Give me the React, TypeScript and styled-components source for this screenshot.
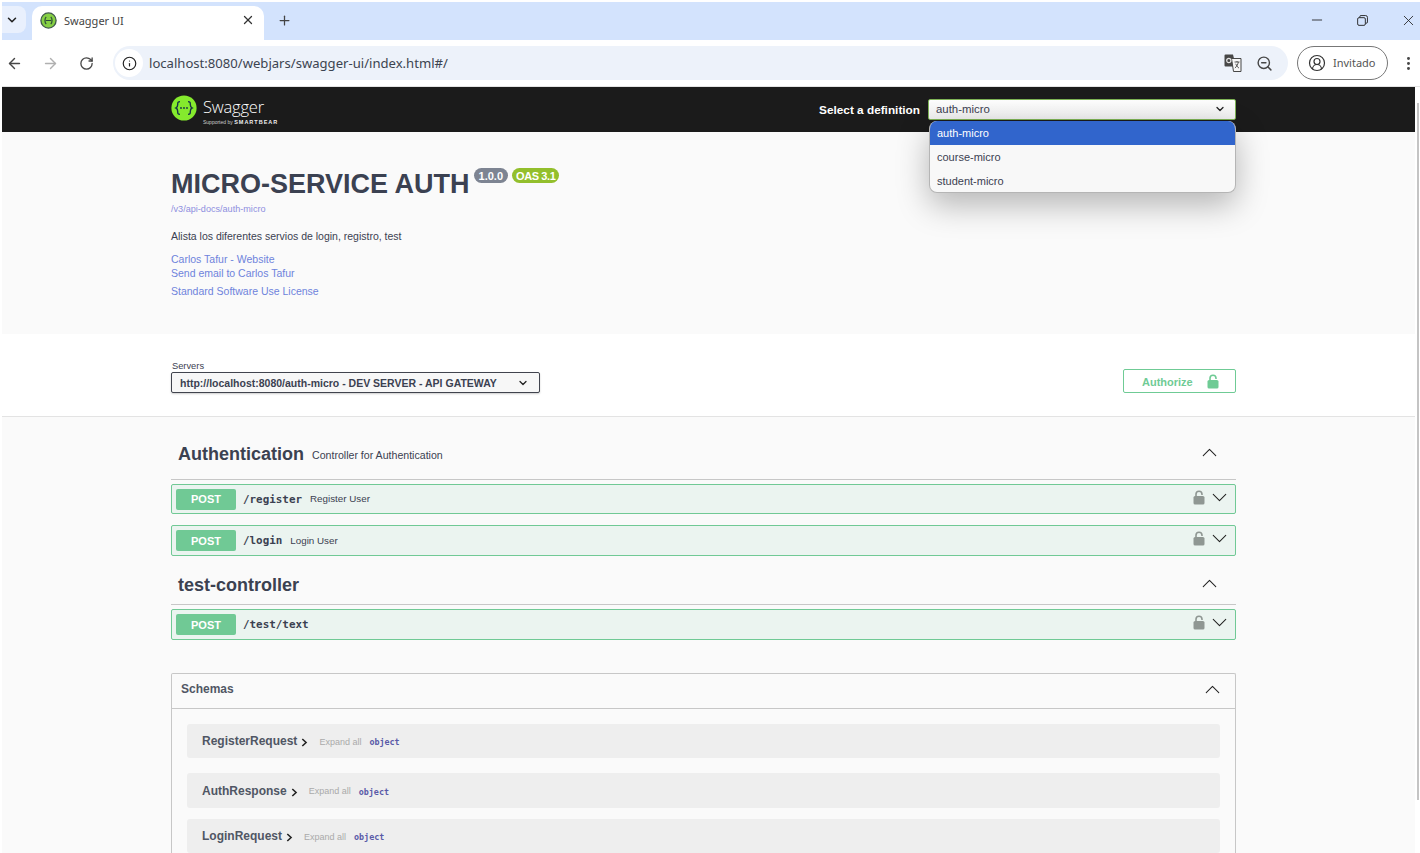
import React from "react";
import styled, { createGlobalStyle } from "styled-components";
import { ArrowLeft, ArrowRight, ChevronDown, ChevronUp, Info, MoreVertical, Plus, RotateCw, ZoomOut, X, Minus, CircleUserRound } from "lucide-react";

const GlobalStyle = createGlobalStyle`
  html, body { margin: 0; padding: 0; background: #fff; }
  body { font-family: "Liberation Sans", Arial, sans-serif; color: #3b4151; height: 853px; overflow: hidden; }
  * { box-sizing: border-box; }
`;

function Lock({ color }: { color: string }) {
  return (
    <svg width="12" height="15" viewBox="0 0 12 15">
      <path d="M3 7V4.2a3 3 0 0 1 6 0V5" fill="none" stroke={color} strokeWidth="1.6" />
      <rect x="0.5" y="6" width="11" height="8.5" rx="1.6" fill={color} />
    </svg>
  );
}

function TranslateIcon() {
  return (
    <svg width="18" height="18" viewBox="0 0 18 18">
      <path d="M1.500 0.500h7.500l3 12H1.500a1 1 0 0 1-1-1v-10a1 1 0 0 1 1-1z" fill="#474747" />
      <path d="M7.500 4.500h9.500v13H9.500z" fill="#f6f6f6" stroke="#474747" strokeWidth="1" />
      <circle cx="4.800" cy="6.500" r="2.100" fill="none" stroke="#e6e6e6" strokeWidth="1.200" />
      <path d="M10.500 8h5M13 7v1M14.300 8c-.4 2.600-1.600 4.600-3.400 6M11.700 9.800c.7 1.800 1.800 3.300 3.300 4.400" fill="none" stroke="#474747" strokeWidth="0.900" />
    </svg>
  );
}

function SwaggerLogo() {
  return (
    <svg width="26" height="26" viewBox="0 0 26 26">
      <circle cx="13" cy="13" r="12.600" fill="#85ea2d" />
      <path
        d="M9 6.600c-2.400 0-2.300 1.300-2.300 3 0 1.800-.3 2.800-1.700 3.400 1.400.6 1.700 1.600 1.700 3.400 0 1.700-.1 3 2.300 3M17 6.600c2.400 0 2.300 1.300 2.300 3 0 1.800.3 2.800 1.700 3.400-1.400.6-1.700 1.600-1.700 3.400 0 1.700.1 3-2.300 3"
        fill="none"
        stroke="#173646"
        strokeWidth="1.400"
      />
      <circle cx="10" cy="13" r="0.900" fill="#173646" />
      <circle cx="13" cy="13" r="0.900" fill="#173646" />
      <circle cx="16" cy="13" r="0.900" fill="#173646" />
    </svg>
  );
}

function Favicon() {
  return (
    <svg width="17" height="17" viewBox="0 0 26 26">
      <circle cx="13" cy="13" r="11.600" fill="#86d044" stroke="#3f5a4a" strokeWidth="2" />
      <path d="M9.500 7.500c-2.600 2.500-2.600 8.500 0 11M16.500 7.500c2.600 2.500 2.600 8.500 0 11M9 13h8" fill="none" stroke="#2c4a3a" strokeWidth="1.800" />
    </svg>
  );
}

function Operation({ path, summary, top, tall }: { path: string; summary: string; top: number; tall?: boolean }) {
  return (
    <OpRow $top={top} $tall={tall}>
      <PostBadge>POST</PostBadge>
      <OpPath>{path}</OpPath>
      <OpSummary>{summary}</OpSummary>
      <OpIcons>
        <Lock color="#8f9793" />
        <ChevronDown size={25} strokeWidth={1} color="#222" />
      </OpIcons>
    </OpRow>
  );
}

function Model({ name, height, top }: { name: string; height: number; top: number }) {
  return (
    <ModelRow $height={height} $top={top}>
      <ModelName>{name}</ModelName>
      <ModelArrow viewBox="0 0 8 10" width="7" height="9">
        <path d="M1.500 1 5.800 5 1.500 9" fill="none" stroke="#222" strokeWidth="1.800" />
      </ModelArrow>
      <ExpandAll>Expand all</ExpandAll>
      <ObjectType>object</ObjectType>
    </ModelRow>
  );
}

export default function App() {
  return (
    <>
      <GlobalStyle />
      <Window>
        <TabStrip>
          <TabSearch>
            <ChevronDown size={14} strokeWidth={2.6} color="#222" />
          </TabSearch>
          <Tab>
            <Favicon />
            <TabTitle>Swagger UI</TabTitle>
            <X size={14} strokeWidth={2.2} color="#333" />
          </Tab>
          <NewTab>
            <Plus size={15} strokeWidth={2} color="#444" />
          </NewTab>
          <WindowControls>
            <Minus size={16} strokeWidth={1.3} color="#222" />
            <RestoreIcon viewBox="0 0 12 12" width="11" height="11">
              <path d="M3 2.700V2a1.400 1.400 0 0 1 1.400-1.400h5a2 2 0 0 1 2 2v5A1.400 1.400 0 0 1 10 9h-.6" fill="none" stroke="#222" />
              <rect x="0.700" y="2.900" width="8.400" height="8.400" rx="1.500" fill="none" stroke="#222" />
            </RestoreIcon>
            <X size={17} strokeWidth={1.2} color="#222" />
          </WindowControls>
        </TabStrip>

        <Toolbar>
          <ArrowLeft size={17} strokeWidth={2} color="#474747" />
          <ArrowRight size={17} strokeWidth={2} color="#b0b0b0" />
          <ReloadIcon size={15} strokeWidth={2.1} color="#474747" />
          <Omnibox>
            <InfoWrap>
              <Info size={15} strokeWidth={1.9} color="#222" />
            </InfoWrap>
            <Url>localhost:8080/webjars/swagger-ui/index.html#/</Url>
            <OmniIcons>
              <TranslateIcon />
              <ZoomOut size={17} strokeWidth={2} color="#474747" />
            </OmniIcons>
          </Omnibox>
          <ProfileChip>
            <CircleUserRound size={18} strokeWidth={1.6} color="#333" />
            <ChipLabel>Invitado</ChipLabel>
          </ProfileChip>
          <MoreIcon size={17} strokeWidth={2.2} color="#474747" />
        </Toolbar>

        <Viewport>
          <Page>
            <Topbar>
              <LogoBox>
                <SwaggerLogo />
                <LogoText>
                  <LogoName>Swagger</LogoName>
                  <LogoSub>
                    Supported by <b>SMARTBEAR</b>
                  </LogoSub>
                </LogoText>
              </LogoBox>
              <DefinitionBox>
                <DefinitionLabel>Select a definition</DefinitionLabel>
                <DefinitionSelect>
                  <span>auth-micro</span>
                  <ChevronDown size={12} strokeWidth={2.6} color="#222" />
                </DefinitionSelect>
                <Dropdown>
                  <DropItem $active>auth-micro</DropItem>
                  <DropItem>course-micro</DropItem>
                  <DropItem>student-micro</DropItem>
                </Dropdown>
              </DefinitionBox>
            </Topbar>

            <InfoSection>
              <TitleRow>
                <Title>MICRO-SERVICE AUTH</Title>
                <Pill>1.0.0</Pill>
                <OasPill>OAS 3.1</OasPill>
              </TitleRow>
              <SpecLink>/v3/api-docs/auth-micro</SpecLink>
              <Description>Alista los diferentes servios de login, registro, test</Description>
              <ContactLinks>
                <InfoLink>Carlos Tafur - Website</InfoLink>
                <InfoLink>Send email to Carlos Tafur</InfoLink>
              </ContactLinks>
              <LicenseLink>Standard Software Use License</LicenseLink>
            </InfoSection>

            <SchemeSection>
              <ServersBox>
                <ServersLabel>Servers</ServersLabel>
                <ServerSelect>
                  <span>http://localhost:8080/auth-micro - DEV SERVER - API GATEWAY</span>
                  <ChevronDown size={12} strokeWidth={2.6} color="#222" />
                </ServerSelect>
              </ServersBox>
              <AuthorizeButton>
                <span>Authorize</span>
                <Lock color="#6fcb95" />
              </AuthorizeButton>
            </SchemeSection>

            <Content>
              <TagHeader $height={63} $pad={12}>
                <TagName>Authentication</TagName>
                <TagDesc>Controller for Authentication</TagDesc>
                <TagChevron>
                  <ChevronUp size={25} strokeWidth={1} color="#222" />
                </TagChevron>
              </TagHeader>
              <Operation path="/register" summary="Register User" top={4} />
              <Operation path="/login" summary="Login User" top={11} tall />
              <TagHeader $height={49} $pad={10}>
                <TagName>test-controller</TagName>
                <TagChevron>
                  <ChevronUp size={25} strokeWidth={1} color="#222" />
                </TagChevron>
              </TagHeader>
              <Operation path="/test/text" summary="" top={4} tall />

              <Schemas>
                <SchemasHead>
                  <SchemasTitle>Schemas</SchemasTitle>
                  <ChevronUp size={25} strokeWidth={1} color="#222" />
                </SchemasHead>
                <SchemasBody>
                  <Model name="RegisterRequest" height={34} top={0} />
                  <Model name="AuthResponse" height={35} top={15} />
                  <Model name="LoginRequest" height={34} top={11} />
                </SchemasBody>
              </Schemas>
            </Content>
          </Page>
          <ScrollEdge />
        </Viewport>
      </Window>
    </>
  );
}

const Window = styled.div`
  width: 1420px;
  height: 853px;
  overflow: hidden;
  padding: 2px 0 0 2px;
  background: #fff;
  display: flex;
  flex-direction: column;
`;

const TabStrip = styled.div`
  flex: none;
  height: 38px;
  background: #d3e3fd;
  display: flex;
  align-items: flex-end;
  font-family: "Noto Sans", "Open Sans", sans-serif;
`;

const TabSearch = styled.div`
  width: 24px;
  height: 27px;
  margin-top: 4px;
  padding-right: 4px;
  align-self: flex-start;
  border-radius: 0 8px 8px 0;
  background: #e9f0fd;
  display: flex;
  align-items: center;
  justify-content: center;
`;

const Tab = styled.div`
  width: 232px;
  height: 34px;
  margin-left: 6px;
  background: #fff;
  border-radius: 10px 10px 0 0;
  display: flex;
  align-items: center;
  padding: 0 9px 6px 8px;
  gap: 7px;
`;

const TabTitle = styled.span`
  flex: 1;
  font-size: 11px;
  color: #444;
`;

const NewTab = styled.div`
  width: 40px;
  height: 34px;
  padding-bottom: 6px;
  display: flex;
  align-items: center;
  justify-content: center;
`;

const WindowControls = styled.div`
  margin-left: auto;
  height: 38px;
  display: flex;
  align-items: center;
  gap: 32px;
  padding: 0 3px 2px 0;
  align-self: flex-start;
`;

const RestoreIcon = styled.svg`
  display: block;
`;

const Toolbar = styled.div`
  flex: none;
  height: 46px;
  display: flex;
  align-items: center;
  padding-left: 4px;
  gap: 19px;
  font-family: "Noto Sans", "Open Sans", sans-serif;
  svg {
    flex: none;
  }
`;

const ReloadIcon = styled(RotateCw)`
  margin-left: 1px;
`;

const MoreIcon = styled(MoreVertical)`
  margin-left: -7px;
`;

const Omnibox = styled.div`
  flex: none;
  width: 1175px;
  height: 34px;
  border-radius: 17px;
  background: #edf2fa;
  display: flex;
  align-items: center;
  padding-left: 2px;
`;

const InfoWrap = styled.div`
  width: 28px;
  height: 28px;
  border-radius: 50%;
  background: #fff;
  display: flex;
  align-items: center;
  justify-content: center;
`;

const Url = styled.div`
  flex: 1;
  margin-left: 6px;
  font-size: 13.100px;
  color: #3c4450;
`;

const OmniIcons = styled.div`
  display: flex;
  align-items: center;
  gap: 14px;
  padding-right: 15px;
`;

const ProfileChip = styled.div`
  flex: none;
  width: 91px;
  height: 34px;
  margin-left: -10px;
  border: 1px solid #777;
  border-radius: 17px;
  display: flex;
  align-items: center;
  padding-left: 10px;
  gap: 7px;
  font-size: 11px;
  color: #555;
`;

const ChipLabel = styled.span`
  margin-top: -2px;
`;

const Viewport = styled.div`
  flex: 1;
  min-height: 0;
  border-top: 1px solid #e3e3e3;
  display: flex;
`;

const Page = styled.div`
  width: 1413px;
  flex: none;
  background: #fafafa;
`;

const ScrollEdge = styled.div`
  width: 2px;
  height: 697px;
  margin: 16px 0 0 2px;
  background: #c4c4c4;
`;

const Topbar = styled.div`
  height: 45px;
  background: #1b1b1b;
  display: flex;
  align-items: center;
  justify-content: space-between;
  padding: 0 179px 0 169px;
`;

const LogoBox = styled.div`
  display: flex;
  align-items: flex-start;
  gap: 6px;
  margin-top: 2px;
`;

const LogoText = styled.div`
  color: #fff;
  display: flex;
  flex-direction: column;
  margin-top: 3px;
`;

const LogoName = styled.div`
  font-family: "Open Sans", sans-serif;
  font-size: 16.500px;
  font-weight: 300;
  line-height: 18px;
  letter-spacing: -0.2px;
`;

const LogoSub = styled.div`
  margin-top: 2px;
  font-size: 5px;
  line-height: 8px;
  color: #ccc;
  white-space: nowrap;
  b {
    font-size: 5.500px;
    font-weight: 700;
    letter-spacing: 1px;
    color: #eee;
  }
`;

const DefinitionBox = styled.div`
  position: relative;
  display: flex;
  align-items: center;
  gap: 8px;
  margin-top: -1px;
`;

const DefinitionLabel = styled.div`
  margin-top: 1px;
  color: #fff;
  font-size: 11.800px;
  font-weight: 700;
`;

const DefinitionSelect = styled.div`
  width: 308px;
  height: 21px;
  border: 1px solid #7eb356;
  border-radius: 2px;
  background: linear-gradient(#fdfdfd, #eeeeee);
  display: flex;
  align-items: center;
  justify-content: space-between;
  padding: 0 9px 0 7px;
  font-size: 11.400px;
  color: #3b4151;
`;

const Dropdown = styled.div`
  position: absolute;
  right: 0;
  top: 22px;
  width: 307px;
  height: 72px;
  background: #f8f8f8;
  border: 1px solid #b5b5b5;
  border-top: none;
  border-radius: 8px;
  overflow: hidden;
  box-shadow: 0 12px 32px rgba(0, 0, 0, 0.28);
  z-index: 5;
`;

const DropItem = styled.div<{ $active?: boolean }>`
  height: 24px;
  display: flex;
  align-items: center;
  padding-left: 7px;
  font-size: 11px;
  background: ${(p) => (p.$active ? "#3165cc" : "transparent")};
  color: ${(p) => (p.$active ? "#fff" : "#3b4151")};
`;

const InfoSection = styled.div`
  height: 202px;
  padding: 35px 0 0 169px;
`;

const TitleRow = styled.div`
  display: flex;
  align-items: flex-start;
`;

const Title = styled.h2`
  margin: 0;
  font-size: 27px;
  line-height: 34px;
  font-weight: 700;
  color: #3b4151;
`;

const Pill = styled.span`
  height: 15px;
  margin: 1px 0 0 4px;
  padding: 0 5px;
  border-radius: 8px;
  background: #7d8492;
  color: #fff;
  font-size: 11px;
  font-weight: 700;
  line-height: 16px;
`;

const OasPill = styled(Pill)`
  padding: 0 4px;
  background: #93bf2c;
  letter-spacing: -0.4px;
`;

const SpecLink = styled.div`
  margin-top: 2px;
  font-size: 9.100px;
  line-height: 12px;
  color: #8e8fe0;
`;

const Description = styled.div`
  margin-top: 14px;
  font-size: 10.500px;
  line-height: 14px;
  color: #3b4151;
`;

const ContactLinks = styled.div`
  margin-top: 9px;
`;

const InfoLink = styled.div`
  font-size: 10.500px;
  line-height: 14px;
  color: #6e83dc;
`;

const LicenseLink = styled(InfoLink)`
  margin-top: 4px;
`;

const SchemeSection = styled.div`
  height: 83px;
  background: #fff;
  border-bottom: 1px solid #e3e3e3;
  display: flex;
  justify-content: space-between;
  padding: 27px 179px 0 169px;
`;

const ServersBox = styled.div`
  display: flex;
  flex-direction: column;
`;

const ServersLabel = styled.div`
  font-size: 9.300px;
  line-height: 11px;
  color: #3b4151;
  padding-left: 1px;
`;

const ServerSelect = styled.div`
  width: 369px;
  height: 21px;
  border: 1px solid #41444e;
  border-radius: 2px;
  box-shadow: 0 1px 2px rgba(0, 0, 0, 0.2);
  background: #f7f7f7;
  display: flex;
  align-items: center;
  justify-content: space-between;
  padding: 0 10px 0 8px;
  font-size: 10.500px;
  font-weight: 700;
  color: #3b4151;
  white-space: nowrap;
`;

const AuthorizeButton = styled.div`
  width: 113px;
  height: 24px;
  margin-top: 8px;
  border: 1px solid #6fcb95;
  border-radius: 2px;
  display: flex;
  align-items: center;
  justify-content: space-between;
  padding: 1px 16px 0 18px;
  font-size: 11px;
  font-weight: 700;
  color: #6fcb95;
`;

const Content = styled.div`
  padding: 0 179px 0 169px;
`;

const TagHeader = styled.div<{ $height: number; $pad: number }>`
  height: ${(p) => p.$height}px;
  border-bottom: 1px solid #c7c7c7;
  display: flex;
  align-items: center;
  padding: ${(p) => p.$pad}px 14px 0 7px;
  gap: 8px;
`;

const TagName = styled.div`
  font-size: 18px;
  font-weight: 700;
  color: #3b4151;
`;

const TagDesc = styled.div`
  font-size: 10.600px;
  margin-top: 2px;
  color: #3b4151;
`;

const TagChevron = styled.div`
  margin: -4px 0 0 auto;
  display: flex;
`;

const OpRow = styled.div<{ $top: number; $tall?: boolean }>`
  height: ${(p) => (p.$tall ? 31 : 30)}px;
  margin-top: ${(p) => p.$top}px;
  border: 1px solid #70c995;
  border-radius: 2px;
  background: #ebf4f0;
  display: flex;
  align-items: center;
  padding: 0 3px 0 4px;
`;

const PostBadge = styled.div`
  width: 60px;
  height: 21px;
  border-radius: 2px;
  background: #70c995;
  color: #fff;
  font-size: 11px;
  font-weight: 700;
  display: flex;
  align-items: center;
  justify-content: center;
`;

const OpPath = styled.div`
  margin-left: 7px;
  font-family: "DejaVu Sans Mono", monospace;
  font-size: 10.900px;
  font-weight: 700;
  color: #3b4151;
`;

const OpSummary = styled.div`
  margin: -1px 0 0 8px;
  font-size: 9.800px;
  color: #3b4151;
`;

const OpIcons = styled.div`
  margin-left: auto;
  display: flex;
  align-items: center;
  gap: 2px;
  margin-top: -4px;
`;

const Schemas = styled.div`
  margin-top: 33px;
  border: 1px solid #c7c7c7;
  border-bottom: none;
  border-radius: 2px 2px 0 0;
`;

const SchemasHead = styled.div`
  height: 35px;
  border-bottom: 1px solid #c7c7c7;
  display: flex;
  align-items: center;
  justify-content: space-between;
  padding: 0 10px 3px 9px;
`;

const SchemasTitle = styled.div`
  margin-top: -2px;
  font-size: 12px;
  font-weight: 700;
  color: #505664;
`;

const SchemasBody = styled.div`
  padding: 15px 15px 0;
`;

const ModelRow = styled.div<{ $height: number; $top: number }>`
  height: ${(p) => p.$height}px;
  margin-top: ${(p) => p.$top}px;
  border-radius: 3px;
  background: #eeeeee;
  display: flex;
  align-items: center;
  padding-left: 15px;
`;

const ModelName = styled.div`
  font-size: 12px;
  font-weight: 700;
  color: #505664;
`;

const ModelArrow = styled.svg`
  margin-left: 4px;
  margin-top: 3px;
`;

const ExpandAll = styled.span`
  margin-left: 11px;
  margin-top: 1px;
  font-size: 9px;
  color: #aaa;
`;

const ObjectType = styled.span`
  margin-left: 8px;
  margin-top: 2px;
  font-family: "DejaVu Sans Mono", monospace;
  font-size: 8.400px;
  font-weight: 700;
  color: #5a5aa8;
`;
